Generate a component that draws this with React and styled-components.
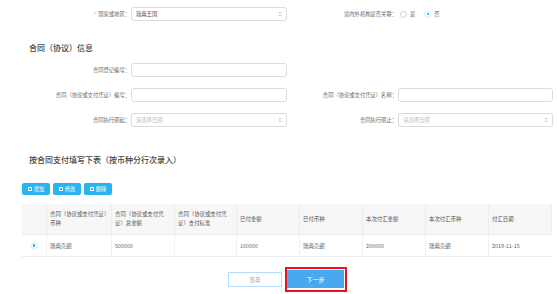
import React from 'react';
import styled, { createGlobalStyle } from 'styled-components';

const Global = createGlobalStyle`
  body {
    margin: 0;
    background: #fff;
    font-family: "Noto Sans CJK SC", "Noto Sans", sans-serif;
    color: #555;
  }
`;

const Page = styled.div`
  width: 557px;
  height: 294px;
  overflow: hidden;
  padding-top: 7px;
  box-sizing: border-box;
`;

/* form rows share one grid so the labels line up */
const FormGrid = styled.div`
  display: grid;
  grid-template-columns: 131px 156px 111px 155px;
  row-gap: 11px;
  margin-top: ${(p) => p.top || 0}px;
`;

const Label = styled.div`
  font-size: 5.3px;
  color: #666;
  text-align: right;
  align-self: center;
  white-space: nowrap;
  padding-right: 1px;
`;

const Star = styled.span`
  color: #f7931e;
  margin-right: 2px;
`;

const Input = styled.div`
  height: 14px;
  border: 1px solid #dcdcdc;
  border-radius: 3px;
  box-sizing: border-box;
  display: flex;
  align-items: center;
  justify-content: space-between;
  padding: 0 4px 0 4px;
  font-size: 5.3px;
  color: ${(p) => (p.placeholder ? '#bbb' : '#555')};
  background: #fff;
`;

const RadioGroup = styled.div`
  display: flex;
  align-items: center;
  gap: 3px;
  font-size: 5.3px;
  color: #666;
  padding-left: 2px;
`;

const Radio = styled.span`
  width: 7px;
  height: 7px;
  border-radius: 50%;
  border: 1px solid ${(p) => (p.checked ? '#cfe9fb' : '#ccc')};
  box-sizing: border-box;
  display: inline-flex;
  align-items: center;
  justify-content: center;
  margin-left: ${(p) => p.gap || 0}px;
  &::after {
    content: '';
    width: 2.5px;
    height: 2.5px;
    border-radius: 50%;
    background: ${(p) => (p.checked ? '#1e9ff2' : 'transparent')};
  }
`;

const SectionTitle = styled.div`
  font-size: 8px;
  line-height: 10px;
  font-weight: 500;
  color: #444;
  padding-left: 29px;
  margin-top: ${(p) => p.top}px;
`;

const Toolbar = styled.div`
  display: flex;
  gap: 3px;
  padding-left: 22px;
  margin-top: 18px;
`;

const ToolButton = styled.div`
  width: 28px;
  height: 12px;
  background: #29b3f3;
  border-radius: 2px;
  color: #fff;
  font-size: 5.3px;
  display: flex;
  align-items: center;
  justify-content: center;
  gap: 2px;
  &::before {
    content: '';
    width: 2px;
    height: 2px;
    border: 0.6px solid #fff;
  }
`;

const Table = styled.div`
  margin: 9px 5px 0 22px;
  display: grid;
  grid-template-columns: 25px 65px 63px 62px 63px 63px 63px 63px 63px;
  font-size: 5.4px;
  color: #666;
`;

const Th = styled.div`
  height: 31px;
  background: #f7f7f7;
  border-right: 1px solid #ececec;
  border-bottom: 1px solid #ececec;
  box-sizing: border-box;
  display: flex;
  align-items: center;
  padding: 0 3px;
  line-height: 9px;
  color: #555;
  &:last-child {
    border-right: none;
  }
`;

const Td = styled.div`
  height: 22px;
  border-right: 1px solid #f0f0f0;
  border-bottom: 1px solid #ececec;
  box-sizing: border-box;
  display: flex;
  align-items: center;
  justify-content: ${(p) => (p.center ? 'center' : 'flex-start')};
  padding: 0 3px;
  &:last-child {
    border-right: none;
  }
`;

const Footer = styled.div`
  display: flex;
  align-items: center;
  padding-left: 228px;
  margin-top: 10px;
`;

const SaveButton = styled.div`
  width: 54px;
  height: 15px;
  border: 1px solid #b7dcf7;
  box-sizing: border-box;
  display: flex;
  align-items: center;
  justify-content: center;
  font-size: 5.5px;
  color: #8fa3b5;
  margin-right: 3px;
`;

const Highlight = styled.div`
  border: 2px solid #e8141b;
  padding: 1px 1px 2px 0;
`;

const NextButton = styled.div`
  width: 57px;
  height: 18px;
  background: #4aa8ee;
  color: #fff;
  font-size: 6px;
  display: flex;
  align-items: center;
  justify-content: center;
`;

const Chevron = () => (
  <svg width="4" height="6" viewBox="0 0 4 6">
    <path d="M0.8 2.2 L2 1 L3.2 2.2 M0.8 3.8 L2 5 L3.2 3.8" fill="none" stroke="#999" strokeWidth="0.6" />
  </svg>
);

const headers = [
  '',
  '合同（协议或支付凭证）币种',
  '合同（协议或支付凭证）总金额',
  '合同（协议或支付凭证）支付标准',
  '已付金额',
  '已付币种',
  '本次付汇金额',
  '本次付汇币种',
  '付汇日期',
];

const row = ['瑞典克朗', '500000', '', '100000', '瑞典克朗', '200000', '瑞典克朗', '2019-11-15'];

export default function App() {
  return (
    <Page>
      <Global />
      <FormGrid>
        <Label><Star>*</Star>国家或地区：</Label>
        <Input>瑞典王国<Chevron /></Input>
        <Label>境内外机构是否关联：</Label>
        <RadioGroup>
          <Radio />是
          <Radio checked gap={6} />否
        </RadioGroup>
      </FormGrid>

      <SectionTitle top={22}>合同（协议）信息</SectionTitle>

      <FormGrid top={10}>
        <Label>合同登记编号：</Label>
        <Input />
        <div />
        <div />
        <Label>合同（协议或支付凭证）编号：</Label>
        <Input />
        <Label>合同（协议或支付凭证）名称：</Label>
        <Input />
        <Label>合同执行期起：</Label>
        <Input placeholder>请选择日期<Chevron /></Input>
        <Label>合同执行期止：</Label>
        <Input placeholder>请选择日期<Chevron /></Input>
      </FormGrid>

      <SectionTitle top={28}>按合同支付填写下表（按币种分行次录入）</SectionTitle>

      <Toolbar>
        <ToolButton>增加</ToolButton>
        <ToolButton>修改</ToolButton>
        <ToolButton>删除</ToolButton>
      </Toolbar>

      <Table>
        {headers.map((h, i) => (
          <Th key={i}>{h}</Th>
        ))}
        <Td center><Radio checked /></Td>
        {row.map((c, i) => (
          <Td key={i}>{c}</Td>
        ))}
      </Table>

      <Footer>
        <SaveButton>暂存</SaveButton>
        <Highlight>
          <NextButton>下一步</NextButton>
        </Highlight>
      </Footer>
    </Page>
  );
}
